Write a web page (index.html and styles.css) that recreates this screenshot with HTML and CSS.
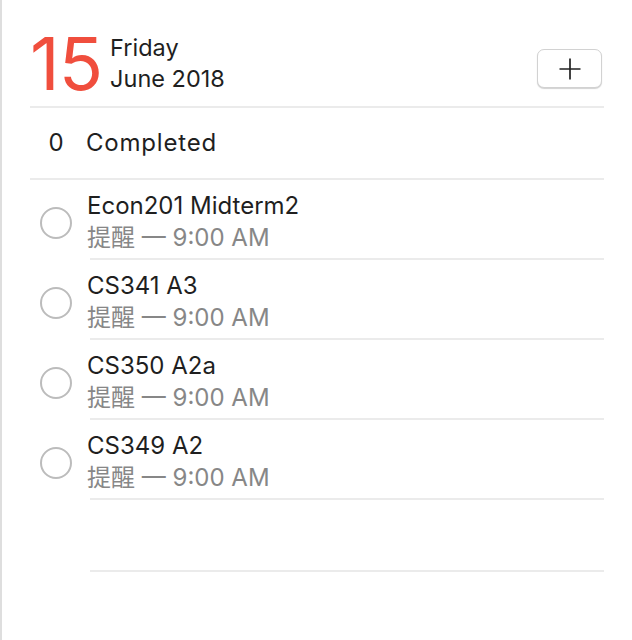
FILE: index.html
```html
<!DOCTYPE html>
<html lang="en">
<head>
<meta charset="utf-8">
<title>Reminders</title>
<link rel="stylesheet" href="styles.css">
</head>
<body>
<div class="app">
  <header class="head">
    <div class="day">15</div>
    <div class="date">
      <div>Friday</div>
      <div>June 2018</div>
    </div>
    <button class="add" type="button" aria-label="Add">
      <svg width="22" height="22" viewBox="0 0 22 22"><path d="M11 0.5V21.5M0.5 11H21.5" stroke="#222" stroke-width="1.7" fill="none"/></svg>
    </button>
  </header>
  <div class="completed">
    <span class="count">0</span>
    <span class="label">Completed</span>
  </div>
  <ul class="list">
    <li class="item">
      <span class="col"><span class="check"></span></span>
      <div class="text"><div class="title">Econ201 Midterm2</div><div class="sub">提醒 — 9:00 AM</div></div>
    </li>
    <li class="item">
      <span class="col"><span class="check"></span></span>
      <div class="text"><div class="title">CS341 A3</div><div class="sub">提醒 — 9:00 AM</div></div>
    </li>
    <li class="item">
      <span class="col"><span class="check"></span></span>
      <div class="text"><div class="title">CS350 A2a</div><div class="sub">提醒 — 9:00 AM</div></div>
    </li>
    <li class="item">
      <span class="col"><span class="check"></span></span>
      <div class="text"><div class="title">CS349 A2</div><div class="sub">提醒 — 9:00 AM</div></div>
    </li>
    <li class="item empty">
      <span class="col"></span>
      <div class="text"></div>
    </li>
  </ul>
</div>
</body>
</html>
```
FILE: styles.css
```css
* { box-sizing: border-box; }
html, body { margin: 0; padding: 0; background: #fff; }
body {
  min-height: 100vh;
  border-left: 2px solid #dedede;
  font-family: Inter, "Noto Sans CJK SC", sans-serif;
  color: #1f1f1f;
}
.app {
  margin-left: 28px;
  width: 574px;
}
.head {
  height: 108px;
  padding-top: 27px;
  display: flex;
  align-items: flex-start;
  border-bottom: 2px solid #ebebeb;
}
.day {
  font-size: 73px;
  line-height: 73px;
  color: #f04e3d;
  letter-spacing: -1px;
}
.date {
  margin-left: 8px;
  margin-top: 5px;
  font-size: 23.5px;
  line-height: 31px;
}
.add {
  margin-left: auto;
  margin-right: 2px;
  margin-top: 22px;
  width: 65px;
  height: 39px;
  border: 1px solid #d2d2d2;
  border-radius: 7px;
  background: #fff;
  box-shadow: 0 1px 1px rgba(0,0,0,0.18);
  display: flex;
  align-items: center;
  justify-content: center;
  padding: 0;
}
.add svg { display: block; }
.completed {
  height: 72px;
  display: flex;
  align-items: center;
  border-bottom: 2px solid #ebebeb;
  font-size: 24px;
  line-height: 32px;
}
.count {
  width: 52px;
  text-align: center;
}
.label {
  margin-left: 4px;
  letter-spacing: 0.8px;
}
.list {
  list-style: none;
  margin: 0;
  padding: 0;
}
.item {
  display: flex;
  height: 80px;
}
.item.empty { height: 72px; }
.col {
  width: 52px;
  display: flex;
  align-items: center;
  justify-content: center;
  padding-top: 6px;
}
.check {
  width: 32px;
  height: 32px;
  border: 2px solid #bcbcbc;
  border-radius: 50%;
}
.text {
  flex: 1;
  margin-left: 8px;
  border-bottom: 2px solid #ebebeb;
  padding-top: 6px;
  display: flex;
  flex-direction: column;
  justify-content: center;
}
.title, .sub {
  margin-left: -3px;
  font-size: 24px;
  line-height: 32px;
}
.sub { color: #878787; }
```
